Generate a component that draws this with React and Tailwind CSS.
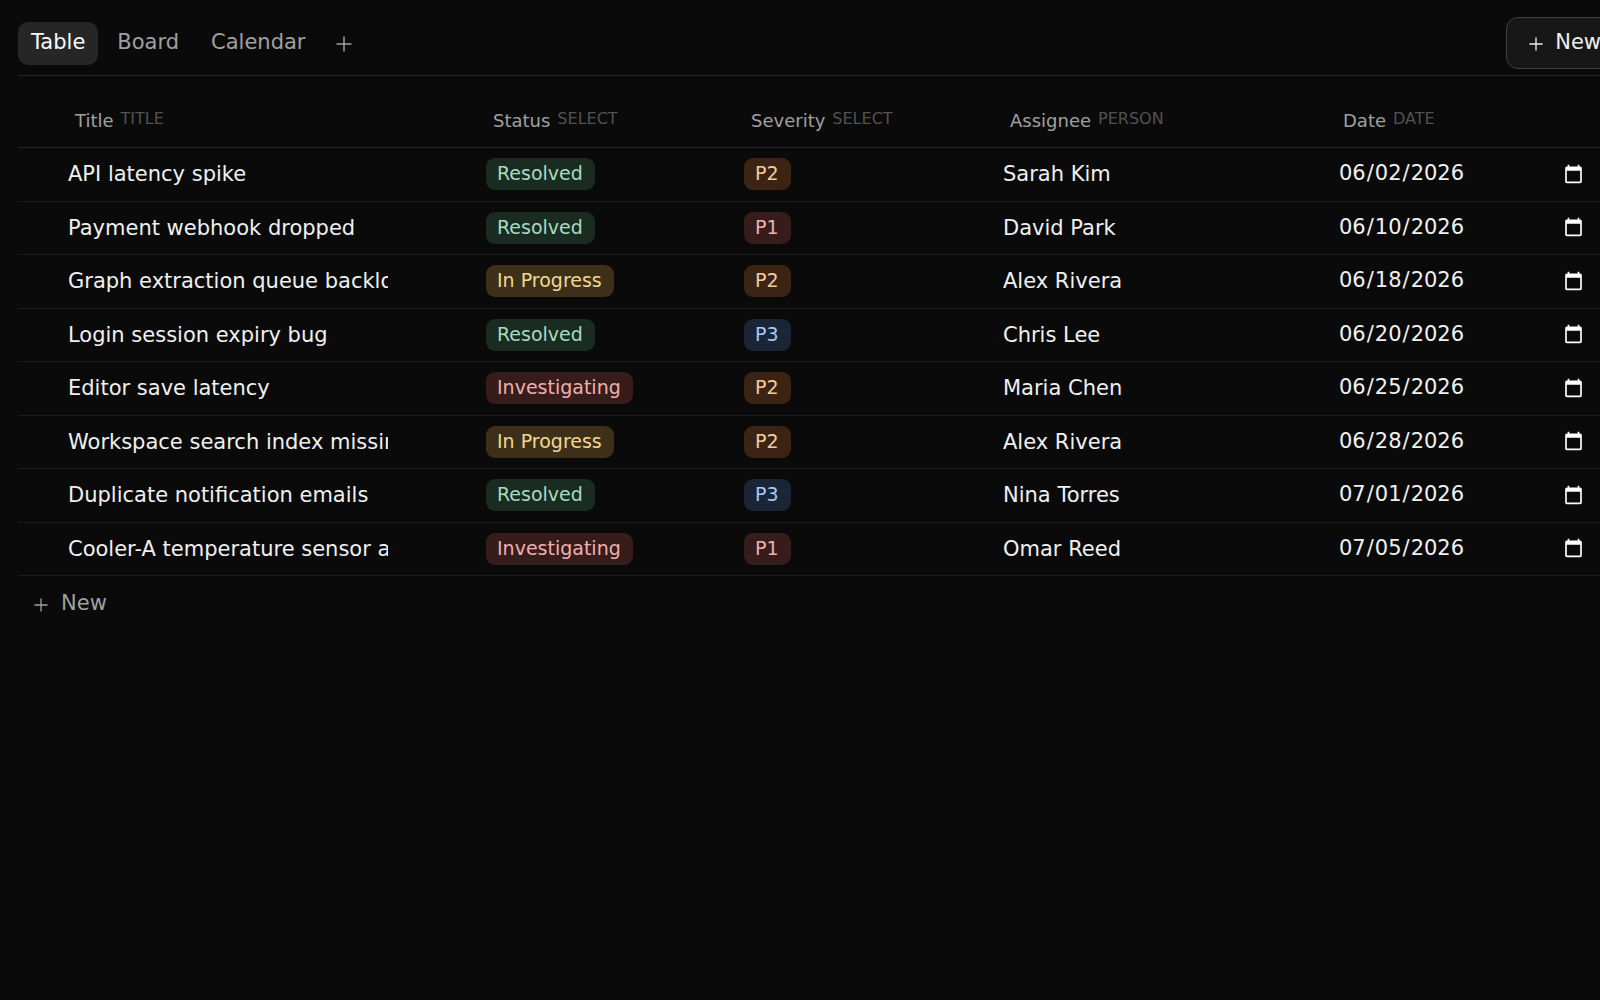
import React, { useState } from 'react';

const VIEWS = ['Table', 'Board', 'Calendar'];

const COLUMNS = [
  { name: 'Title', type: 'TITLE', width: 'w-[418px]' },
  { name: 'Status', type: 'SELECT', width: 'w-[258px]' },
  { name: 'Severity', type: 'SELECT', width: 'w-[259px]' },
  { name: 'Assignee', type: 'PERSON', width: 'w-[333px]' },
  { name: 'Date', type: 'DATE', width: 'w-[336px]' },
];

const TAG_COLORS = {
  Resolved: 'bg-[#1a2b22] text-[#a8dcc0]',
  'In Progress': 'bg-[#3d2f18] text-[#f0d896]',
  Investigating: 'bg-[#361d1c] text-[#f0b0b0]',
  P1: 'bg-[#361d1c] text-[#f0b0b0]',
  P2: 'bg-[#3c2415] text-[#f5cba0]',
  P3: 'bg-[#1a2536] text-[#a8c8f5]',
};

const INITIAL_ROWS = [
  { id: 1, title: 'API latency spike', status: 'Resolved', severity: 'P2', assignee: 'Sarah Kim', date: '2026-06-02' },
  { id: 2, title: 'Payment webhook dropped', status: 'Resolved', severity: 'P1', assignee: 'David Park', date: '2026-06-10' },
  { id: 3, title: 'Graph extraction queue backlog', status: 'In Progress', severity: 'P2', assignee: 'Alex Rivera', date: '2026-06-18' },
  { id: 4, title: 'Login session expiry bug', status: 'Resolved', severity: 'P3', assignee: 'Chris Lee', date: '2026-06-20' },
  { id: 5, title: 'Editor save latency', status: 'Investigating', severity: 'P2', assignee: 'Maria Chen', date: '2026-06-25' },
  { id: 6, title: 'Workspace search index missing', status: 'In Progress', severity: 'P2', assignee: 'Alex Rivera', date: '2026-06-28' },
  { id: 7, title: 'Duplicate notification emails', status: 'Resolved', severity: 'P3', assignee: 'Nina Torres', date: '2026-07-01' },
  { id: 8, title: 'Cooler-A temperature sensor alert', status: 'Investigating', severity: 'P1', assignee: 'Omar Reed', date: '2026-07-05' },
];

function PlusIcon({ className }) {
  return (
    <svg viewBox="0 0 16 16" className={className} fill="none" stroke="currentColor" strokeWidth="1.5" aria-hidden="true">
      <path d="M8 0.5v15M0.5 8h15" />
    </svg>
  );
}

function Tag({ label, value }) {
  return (
    <button
      type="button"
      aria-label={`${label}: ${value}`}
      className={`block h-8 rounded-[9px] pl-[11px] pr-3 pb-[2px] text-[19px] leading-[30px] ${TAG_COLORS[value]}`}
    >
      {value}
    </button>
  );
}

export default function App() {
  const [view, setView] = useState('Table');
  const [rows, setRows] = useState(INITIAL_ROWS);

  const updateRow = (id, field, value) => {
    setRows(rows.map((row) => (row.id === id ? { ...row, [field]: value } : row)));
  };

  const addRow = () => {
    setRows([
      ...rows,
      { id: rows.length + 1, title: '', status: 'Investigating', severity: 'P3', assignee: '', date: '' },
    ]);
  };

  return (
    <div className="min-h-screen overflow-hidden bg-[#0a0a0a] pl-[18px] pt-[17px] font-['DejaVu_Sans',sans-serif] text-[21px] text-[#f0f0f0]">
      <div className="-mr-6 flex items-start justify-between border-b border-[#262626] pb-[6px]">
        <nav className="flex items-center gap-[6px] pt-[5px]">
          {VIEWS.map((name) => (
            <button
              key={name}
              type="button"
              onClick={() => setView(name)}
              className={`h-[43px] rounded-[10px] px-[13px] pb-[3px] leading-7 ${
                view === name ? 'bg-[#262626] text-[#fafafa]' : 'text-[#a0a0a0]'
              }`}
            >
              {name}
            </button>
          ))}
          <button type="button" aria-label="Add view" className="ml-2 p-1 text-[#a0a0a0]">
            <PlusIcon className="size-4" />
          </button>
        </nav>
        <button
          type="button"
          onClick={addRow}
          className="flex h-[52px] items-center gap-3 rounded-xl border border-[#404040] bg-[#171717] px-[22px] leading-7"
        >
          <PlusIcon className="mt-[2px] size-[14px]" />
          <span className="pb-[2px]">New</span>
        </button>
      </div>

      <table className="mt-[17px] w-[1646px] table-fixed border-collapse">
        <thead>
          <tr className="h-[54px] border-b border-[#262626]">
            <th className="w-[42px]" aria-label="Row handle" />
            {COLUMNS.map((col) => (
              <th key={col.name} scope="col" className={`${col.width} pl-[15px] text-left font-normal`}>
                <button type="button" className="flex items-center gap-[7px] pt-[2px] leading-6">
                  <span className="text-[18px] text-[#a0a0a0]">{col.name}</span>
                  <span className="pb-[3px] text-[16px] leading-5 text-[#525252]">{col.type}</span>
                </button>
              </th>
            ))}
          </tr>
        </thead>
        <tbody>
          {rows.map((row) => (
            <tr key={row.id} className="border-b border-[#1c1c1c] odd:h-[54px] even:h-[53px]">
              <td />
              <td className="pl-2">
                <input
                  type="text"
                  aria-label="Title"
                  value={row.title}
                  onChange={(e) => updateRow(row.id, 'title', e.target.value)}
                  className="block h-8 w-80 bg-transparent outline-none"
                />
              </td>
              <td className="pl-2">
                <Tag label="Status" value={row.status} />
              </td>
              <td className="pl-2">
                <Tag label="Severity" value={row.severity} />
              </td>
              <td className="pl-2">
                <input
                  type="text"
                  aria-label="Assignee"
                  value={row.assignee}
                  onChange={(e) => updateRow(row.id, 'assignee', e.target.value)}
                  className="block h-8 w-[300px] bg-transparent outline-none"
                />
              </td>
              <td className="pl-[10px]">
                <input
                  type="date"
                  aria-label="Date"
                  value={row.date}
                  onChange={(e) => updateRow(row.id, 'date', e.target.value)}
                  className="block h-8 w-[248px] bg-transparent outline-none scheme-dark"
                />
              </td>
            </tr>
          ))}
        </tbody>
      </table>

      <button type="button" onClick={addRow} className="flex h-[57px] items-center gap-[13px] px-4 text-[#a0a0a0]">
        <PlusIcon className="mt-[2px] size-[14px]" />
        <span>New</span>
      </button>
    </div>
  );
}
